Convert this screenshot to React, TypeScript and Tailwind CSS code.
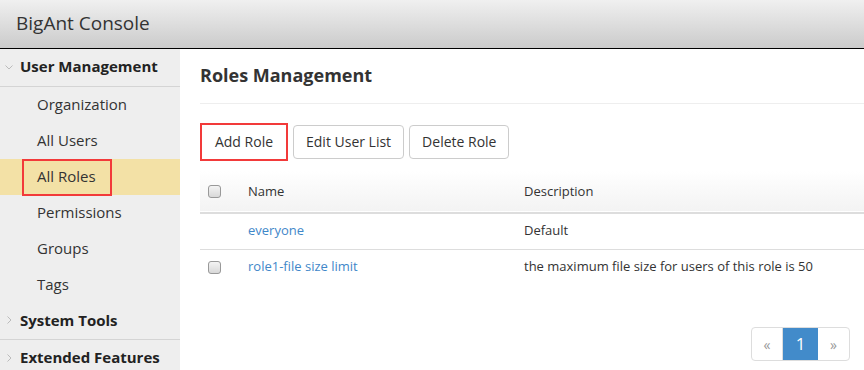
import React from "react";

const subItems = ["Organization", "All Users", "All Roles", "Permissions", "Groups", "Tags"];

const roles = [
	{ name: "everyone", description: "Default", checkbox: false },
	{ name: "role1-file size limit", description: "the maximum file size for users of this role is 50", checkbox: true },
];

function Chevron({ down }: { down?: boolean }) {
	return (
		<svg width="8" height="8" viewBox="0 0 8 8" className="shrink-0">
			{down ? (
				<path d="M0.5 2.5 L4 6 L7.5 2.5" fill="none" stroke="#bbb" strokeWidth="1" />
			) : (
				<path d="M2.5 0.5 L6 4 L2.5 7.5" fill="none" stroke="#bbb" strokeWidth="1" />
			)}
		</svg>
	);
}

function Checkbox() {
	return <span className="block w-[13px] h-[13px] rounded-[3px] border border-[#999] bg-gradient-to-b from-[#f4f4f4] to-[#d8d8d8]" />;
}

export default function App() {
	return (
		<div className="w-[864px] h-[370px] overflow-hidden bg-white text-[#333] font-['Open_Sans','Noto_Sans',sans-serif]">
			<header className="h-[49px] border-b border-black bg-gradient-to-b from-[#f0f0f0] to-[#cbcbcb] flex items-center pl-4 pb-[2px]">
				<span className="text-[19px] text-[#333]">BigAnt Console</span>
			</header>
			<div className="flex h-[321px]">
				<aside className="w-[180px] shrink-0 bg-[#eeeeee]">
					<div className="h-[38px] flex items-center gap-[7px] pl-[5px] border-b border-[#d4d4d4] pb-[2px]">
						<Chevron down />
						<span className="text-[15px] font-bold text-[#222]">User Management</span>
					</div>
					<ul>
						{subItems.map((item) =>
							item === "All Roles" ? (
								<li key={item} className="h-[36px] bg-[#f3e1a6] flex items-center pl-[22px]">
									<span className="h-[37px] w-[90px] border-2 border-[#f23a3a] flex items-center pl-[13px] pb-[2px] text-[15px] text-[#333]">
										{item}
									</span>
								</li>
							) : (
								<li key={item} className="h-[36px] flex items-center pl-[37px] pb-[2px] text-[15px] text-[#333]">
									{item}
								</li>
							)
						)}
					</ul>
					<div className="h-[37px] flex items-center gap-[7px] pl-[5px] border-b border-[#d4d4d4] pb-[2px]">
						<Chevron />
						<span className="text-[15px] font-bold text-[#222]">System Tools</span>
					</div>
					<div className="h-[37px] flex items-center gap-[7px] pl-[5px] pb-[2px]">
						<Chevron />
						<span className="text-[15px] font-bold text-[#222]">Extended Features</span>
					</div>
				</aside>
				<main className="flex-1 pl-5">
					<div className="h-[55px] flex items-center border-b border-[#eee] pb-[2px]">
						<h1 className="text-[18px] font-bold text-[#333]">Roles Management</h1>
					</div>
					<div className="flex items-center gap-[5px] mt-[19px]">
						<button className="h-[38px] w-[88px] border-2 border-[#f23a3a] text-[14px] text-[#333] bg-white pb-[2px]">Add Role</button>
						<button className="h-[34px] px-3 border border-[#ccc] rounded text-[14px] text-[#333] bg-white pb-[2px]">Edit User List</button>
						<button className="h-[34px] px-3 border border-[#ccc] rounded text-[14px] text-[#333] bg-white pb-[2px]">Delete Role</button>
					</div>
					<table className="w-full mt-[10px] text-[13px] border-collapse">
						<thead>
							<tr className="h-[42px] bg-gradient-to-b from-white to-[#f3f3f3] border-b-2 border-[#ddd]">
								<th className="w-[48px] pl-2 text-left font-normal"><Checkbox /></th>
								<th className="w-[276px] text-left font-normal">Name</th>
								<th className="text-left font-normal">Description</th>
							</tr>
						</thead>
						<tbody>
							{roles.map((role) => (
								<tr key={role.name} className="h-[36px] border-b border-[#ddd] last:border-b-0">
									<td className="pl-2">{role.checkbox && <Checkbox />}</td>
									<td className="text-[#3f87c9] pb-[2px]">{role.name}</td>
									<td className="pb-[2px]">{role.description}</td>
								</tr>
							))}
						</tbody>
					</table>
					<div className="flex justify-end pr-[14px] mt-[42px]">
						<div className="flex h-[34px] border border-[#ddd] rounded overflow-hidden text-[14px]">
							<span className="w-[31px] flex items-center justify-center text-[#999] border-r border-[#ddd]">«</span>
							<span className="w-[35px] flex items-center justify-center bg-[#428bca] text-white text-[17px]">1</span>
							<span className="w-[31px] flex items-center justify-center text-[#999]">»</span>
						</div>
					</div>
				</main>
			</div>
		</div>
	);
}
